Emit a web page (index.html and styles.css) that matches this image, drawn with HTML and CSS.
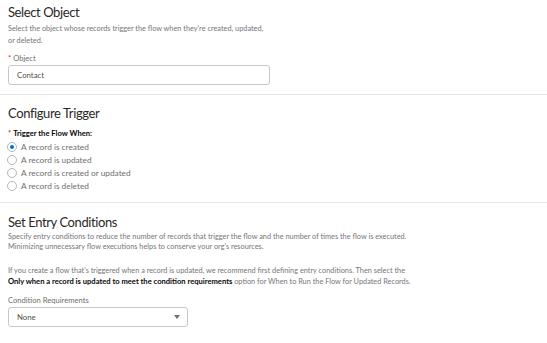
FILE: index.html
```html
<!DOCTYPE html>
<html>
<head>
<meta charset="utf-8">
<link rel="stylesheet" href="styles.css">
</head>
<body>
<section class="sec sec-object">
  <h2 class="title">Select Object</h2>
  <p class="desc">Select the object whose records trigger the flow when they're created, updated,<br>or deleted.</p>
  <label class="label"><span class="req">*</span>Object</label>
  <div class="input">Contact</div>
</section>
<section class="sec sec-trigger">
  <h2 class="title">Configure Trigger</h2>
  <div class="label bold"><span class="req">*</span>Trigger the Flow When:</div>
  <ul class="radios">
    <li class="radio"><span class="dot checked"></span>A record is created</li>
    <li class="radio"><span class="dot"></span>A record is updated</li>
    <li class="radio"><span class="dot"></span>A record is created or updated</li>
    <li class="radio"><span class="dot"></span>A record is deleted</li>
  </ul>
</section>
<section class="sec sec-entry">
  <h2 class="title">Set Entry Conditions</h2>
  <p class="desc">Specify entry conditions to reduce the number of records that trigger the flow and the number of times the flow is executed.<br>Minimizing unnecessary flow executions helps to conserve your org's resources.</p>
  <p class="desc">If you create a flow that's triggered when a record is updated, we recommend first defining entry conditions. Then select the<br><b>Only when a record is updated to meet the condition requirements</b> option for When to Run the Flow for Updated Records.</p>
  <div class="label">Condition Requirements</div>
  <div class="select"><span>None</span><svg class="caret" width="6" height="4" viewBox="0 0 6 4"><path d="M0 0H6L3 4Z" fill="#706e6b"/></svg></div>
</section>
</body>
</html>
```

FILE: styles.css
```css
html, body {
  margin: 0;
  padding: 0;
  background: #fff;
}
body {
  font-family: "Lato", "Open Sans", sans-serif;
  color: #3e3e3c;
  width: 547px;
}
.sec {
  padding: 0 8px;
  border-bottom: 1px solid #e5e5e5;
}
.sec:last-child {
  border-bottom: none;
}
.title {
  margin: 0;
  font-weight: 400;
  font-size: 13px;
  letter-spacing: -0.4px;
  line-height: 18px;
  color: #2b2826;
}
.sec-object .title { padding-top: 3px; }
.sec-trigger .title { padding-top: 9px; }
.sec-entry .title { padding-top: 10px; }
.desc {
  margin: 2px 0 0;
  font-size: 7.35px;
  line-height: 12px;
  color: #77757a;
}
.sec-entry .desc {
  line-height: 10px;
  margin-top: 1px;
}
.sec-entry .desc + .desc { margin-top: 14px; }
.desc b { color: #080707; font-weight: 700; font-size: 7.6px; }
.label {
  display: block;
  font-size: 7.6px;
  line-height: 10px;
  color: #706e6b;
  margin-top: 6px;
}
.sec-entry .label { margin-top: 8px; }
.label.bold {
  color: #080707;
  font-weight: 700;
  margin-top: 6px;
}
.req {
  color: #c23934;
  margin-right: 2px;
}
.input {
  margin-top: 2px;
  width: 262px;
  height: 20px;
  box-sizing: border-box;
  border: 1px solid #c9c7c5;
  border-radius: 3px;
  padding: 0 8px;
  font-size: 7.8px;
  line-height: 18px;
  color: #514f4d;
  margin-bottom: 9px;
}
.radios {
  list-style: none;
  margin: 2px 0 0;
  padding: 0 0 10px;
}
.radio {
  display: flex;
  align-items: center;
  height: 13px;
  font-size: 8.3px;
  color: #706e6b;
}
.dot {
  width: 10px;
  height: 10px;
  box-sizing: border-box;
  border: 1px solid #b8b6b4;
  border-radius: 50%;
  margin-right: 4px;
  margin-left: -1px;
  position: relative;
  flex: none;
}
.dot.checked::after {
  content: "";
  position: absolute;
  left: 2px;
  top: 2px;
  width: 4px;
  height: 4px;
  border-radius: 50%;
  background: #0070d2;
}
.select {
  margin-top: 2px;
  width: 180px;
  height: 20px;
  box-sizing: border-box;
  border: 1px solid #c9c7c5;
  border-radius: 3px;
  padding: 0 7px 0 8px;
  font-size: 7.8px;
  line-height: 18px;
  color: #514f4d;
  display: flex;
  justify-content: space-between;
  align-items: center;
}
```
